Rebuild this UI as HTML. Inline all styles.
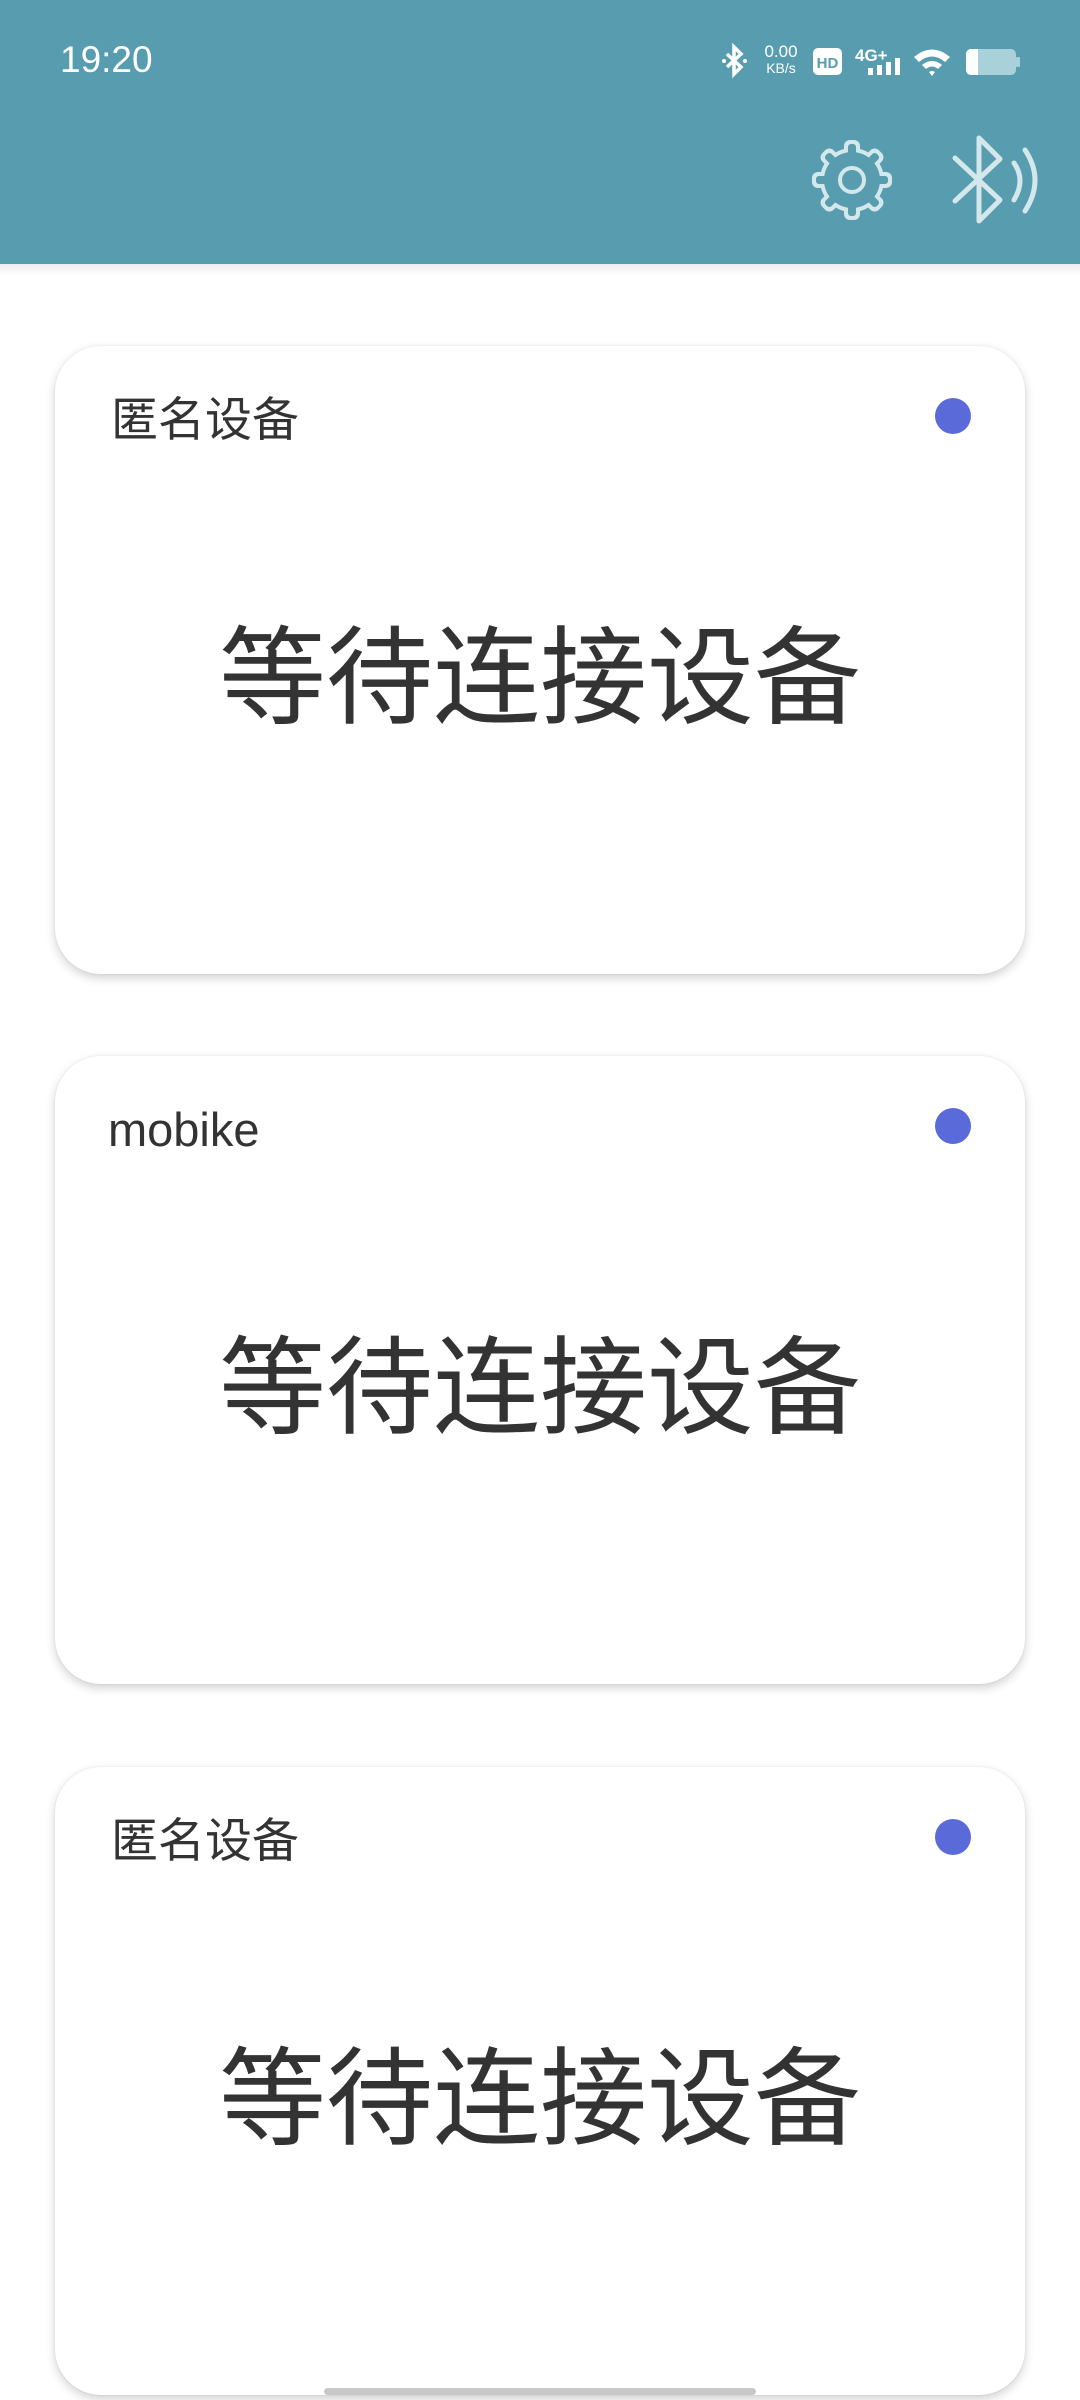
<!DOCTYPE html>
<html><head><meta charset="utf-8"><style>
*{margin:0;padding:0;box-sizing:border-box}
body{width:1080px;height:2400px;background:#fff;position:relative;overflow:hidden;font-family:"Liberation Sans","Noto Sans CJK SC",sans-serif;color:#333}
.hdr{position:absolute;left:0;top:0;width:1080px;height:264px;background:#579DAF}
.shadow{position:absolute;left:0;top:264px;width:1080px;height:12px;background:linear-gradient(#eee,#fff)}
.time{position:absolute;left:60px;top:39px;font-size:37px;color:#fff}
.card{position:absolute;left:55px;width:970px;height:628px;background:#fff;border-radius:46px;box-shadow:0 4px 10px rgba(0,0,0,.18),0 0 2px rgba(0,0,0,.08)}
.t{position:absolute;left:56px;top:46px;font-size:47px;line-height:56px}
.dot{position:absolute;left:880px;top:52px;width:36px;height:36px;border-radius:50%;background:#5A6AD8}
.big{position:absolute;left:0;width:100%;top:267px;text-align:center;font-size:107px;line-height:130px}
.nav{position:absolute;left:324px;top:2388px;width:432px;height:7px;border-radius:4px;background:#c8c8c8}
</style></head><body>
<div class="hdr"></div><div class="shadow"></div>
<div class="time">19:20</div>
<svg style="position:absolute;left:700px;top:30px" width="340" height="60" viewBox="700 30 340 60">
<g fill="none" stroke="#fff" stroke-width="3.5"><path d="M727 54 L741 67 L734 74 L734 47 L741 54 L727 67"/></g>
<circle cx="724" cy="61" r="2" fill="#fff"/><circle cx="745" cy="61" r="2" fill="#fff"/>
<text x="781" y="57" font-size="17" fill="#fff" text-anchor="middle" font-family="Liberation Sans">0.00</text>
<text x="781" y="73" font-size="14" fill="#fff" text-anchor="middle" font-family="Liberation Sans">KB/s</text>
<rect x="813" y="48" width="29" height="27" rx="5" fill="#fff"/>
<text x="827.5" y="68" font-size="15" font-weight="bold" fill="#579DAF" text-anchor="middle" font-family="Liberation Sans">HD</text>
<text x="855" y="61" font-size="17" font-weight="bold" fill="#fff" font-family="Liberation Sans">4G+</text>
<rect x="868" y="68" width="5" height="7" fill="#fff"/><rect x="877" y="65" width="5" height="10" fill="#fff"/><rect x="886" y="62" width="5" height="13" fill="#fff"/><rect x="895" y="58" width="5" height="17" fill="#fff"/>
<path d="M914 57 Q932 42 950 57 L945 62 Q932 51 919 62Z M922 65 Q932 57 942 65 L938 69 Q932 64 926 69Z M932 76 L929 72 Q932 70 935 72Z" fill="#fff"/>
<rect x="966" y="49" width="50" height="26" rx="5" fill="#A9D1DA"/>
<path d="M971 49 h7 v26 h-7 a5 5 0 0 1 -5 -5 v-16 a5 5 0 0 1 5 -5z" fill="#fff"/>
<rect x="1016" y="57" width="4" height="10" rx="1" fill="#A9D1DA"/>
</svg>
<svg style="position:absolute;left:800px;top:120px" width="260" height="120" viewBox="800 120 260 120" fill="none" stroke="#D4E8EC" stroke-linecap="round" stroke-linejoin="round">
<g fill="#D4E8EC" stroke="none">
<circle cx="852" cy="180" r="32"/>
<rect x="844" y="140" width="16" height="20" rx="6"/>
<rect x="844" y="140" width="16" height="20" rx="6" transform="rotate(45 852 180)"/>
<rect x="844" y="140" width="16" height="20" rx="6" transform="rotate(90 852 180)"/>
<rect x="844" y="140" width="16" height="20" rx="6" transform="rotate(135 852 180)"/>
<rect x="844" y="140" width="16" height="20" rx="6" transform="rotate(180 852 180)"/>
<rect x="844" y="140" width="16" height="20" rx="6" transform="rotate(225 852 180)"/>
<rect x="844" y="140" width="16" height="20" rx="6" transform="rotate(270 852 180)"/>
<rect x="844" y="140" width="16" height="20" rx="6" transform="rotate(315 852 180)"/>
</g>
<g fill="#579DAF" stroke="none">
<circle cx="852" cy="180" r="28"/>
<rect x="848" y="144" width="8" height="20" rx="3"/>
<rect x="848" y="144" width="8" height="20" rx="3" transform="rotate(45 852 180)"/>
<rect x="848" y="144" width="8" height="20" rx="3" transform="rotate(90 852 180)"/>
<rect x="848" y="144" width="8" height="20" rx="3" transform="rotate(135 852 180)"/>
<rect x="848" y="144" width="8" height="20" rx="3" transform="rotate(180 852 180)"/>
<rect x="848" y="144" width="8" height="20" rx="3" transform="rotate(225 852 180)"/>
<rect x="848" y="144" width="8" height="20" rx="3" transform="rotate(270 852 180)"/>
<rect x="848" y="144" width="8" height="20" rx="3" transform="rotate(315 852 180)"/>
</g>
<circle cx="852" cy="180" r="12" stroke-width="4"/>
<g stroke-width="5">
<path d="M955 158 L1000 200 L979 221 L979 138 L1000 159 L955 201"/>
<path d="M1014 163 Q1026 180 1014 200"/>
<path d="M1025 150 Q1045 180 1025 211"/>
</g>
</svg>
<div class="card" style="top:346px"><div class="t">匿名设备</div><div class="dot"></div><div class="big">等待连接设备</div></div>
<div class="card" style="top:1056px"><div class="t" style="left:53px">mobike</div><div class="dot"></div><div class="big">等待连接设备</div></div>
<div class="card" style="top:1767px"><div class="t">匿名设备</div><div class="dot"></div><div class="big">等待连接设备</div></div>
<div class="nav"></div>
</body></html>
